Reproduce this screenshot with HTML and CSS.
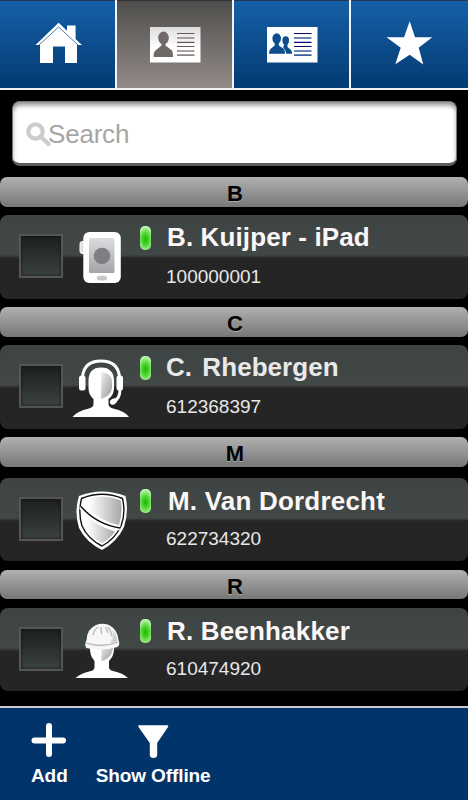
FILE: index.html
```
<!DOCTYPE html>
<html lang="en">
<head>
    <meta charset="UTF-8">
    <meta name="viewport" content="width=device-width, initial-scale=1.0">
    <title>Contacts</title>
    <link rel="stylesheet" href="styles.css">
</head>
<body>
    <!-- Shared gradients for the contact icons -->
    <svg class="defs" width="0" height="0">
        <defs>
            <linearGradient id="shade" x1="0" y1="0" x2="1" y2="1">
                <stop offset="0" stop-color="#eee"/>
                <stop offset="1" stop-color="#999ba0"/>
            </linearGradient>
            <linearGradient id="metal" x1="0" y1="0" x2="1" y2="0">
                <stop offset="0.15" stop-color="#fff"/>
                <stop offset="1" stop-color="#a6a8ab"/>
            </linearGradient>
            <linearGradient id="screen" x1="0" y1="0" x2="0" y2="1">
                <stop offset="0" stop-color="#dcdddf"/>
                <stop offset="1" stop-color="#a2a4a8"/>
            </linearGradient>
            <linearGradient id="card" x1="0" y1="0" x2="0" y2="1">
                <stop offset="0" stop-color="#ddd"/>
                <stop offset="0.6" stop-color="#fff"/>
            </linearGradient>
        </defs>
    </svg>

    <nav class="tabs">
        <a class="tab" aria-label="Home">
            <svg width="115" height="88" viewBox="0 0 115 88">
                <path d="M40 43.500L58.600 26.500L77 43.500V63H65V46.500H53V63H40z" fill="#fff"/>
                <path d="M35.500 45L58.600 22.800L67 30.800V25.500H75.600V39L82 45H77.500L58.600 27L39.500 45z" fill="#fff"/>
                <path d="M39 45L58.600 27L78 45" fill="none" stroke="#356ba8" stroke-width="0.9"/>
            </svg>
        </a>
        <a class="tab active" aria-label="Contacts">
            <svg width="115" height="88" viewBox="0 0 115 88">
                <rect x="33" y="27" width="50.500" height="35.500" fill="url(#card)"/>
                <ellipse cx="46.500" cy="38" rx="5.300" ry="6.400" fill="#6f6a68"/>
                <path d="M44.500 43.500H48.500V45.500L55 50.500Q56 52 56 57H36.500Q36.500 52 38.500 50.500L44.500 45.500z" fill="#6f6a68"/>
                <path d="M60 33.500H77.500M60 42.300H77.500M60 46.500H77.500" stroke="#65595a" stroke-width="1.200"/>
                <path d="M60 38H77.500M60 51H77.500M60 55.200H77.500" stroke="#8c8584" stroke-width="1.700"/>
            </svg>
        </a>
        <a class="tab" aria-label="Groups">
            <svg width="115" height="88" viewBox="0 0 115 88">
                <rect x="33" y="27" width="50.500" height="35.500" fill="#fff"/>
                <g fill="#0e4e90">
                    <ellipse cx="42.700" cy="38.500" rx="4.300" ry="5.300"/>
                    <path d="M40.700 42H44.800V45.500L50 49Q51 50.500 51 53.700H35Q35 50.500 36.500 49L40.700 45.500z"/>
                    <ellipse cx="51.700" cy="40.500" rx="3.300" ry="4.200"/>
                    <path d="M50.200 44H53.500V47L57 50Q58.200 51.500 58.200 53.700H52.300Q52 50 49.200 47.800z"/>
                </g>
                <path d="M60 33.500H77.500M60 42.300H77.500M60 46.500H77.500" stroke="#080877" stroke-width="1.200"/>
                <path d="M60 38H77.500M60 51H77.500M60 55.200H77.500" stroke="#3a6098" stroke-width="1.700"/>
            </svg>
        </a>
        <a class="tab" aria-label="Favorites">
            <svg width="117" height="88" viewBox="0 0 117 88">
                <path d="M58.700 21.300L64 37.300H81.300L67.700 47.800L72.300 64.500L58.700 54.700L44.300 64.300L49.700 47.800L35.500 37.300H53z" fill="#fff"/>
            </svg>
        </a>
    </nav>

    <div class="search">
        <svg width="25" height="25" viewBox="0 0 25 25">
            <circle cx="9.500" cy="9.500" r="7.200" fill="none" stroke="#ccc" stroke-width="4.200"/>
            <path d="M15 15L22.500 22" stroke="#ccc" stroke-width="4.400" stroke-linecap="round"/>
        </svg>
        <span>Search</span>
    </div>

    <main class="contacts">
        <h2 class="letter">B</h2>
        <div class="contact">
            <span class="checkbox"></span>
            <svg class="avatar" width="60" height="62" viewBox="0 0 60 62">
                <path d="M12 14.500H10Q8 14.500 8 17V24Q8 26.500 10 26.500H12z" fill="#ddd" stroke="#fff"/>
                <rect x="11.300" y="5" width="37.500" height="51" rx="6" fill="#fff"/>
                <rect x="17" y="11" width="25.500" height="35" rx="1.500" fill="url(#screen)"/>
                <circle cx="30" cy="29" r="8.300" fill="#7d7f82"/>
                <ellipse cx="30" cy="51" rx="5.200" ry="2.600" fill="#c6c7c9"/>
            </svg>
            <span class="status"></span>
            <div class="info">
                <div class="name name-b">B. Kuijper - iPad</div>
                <div class="number">100000001</div>
            </div>
        </div>

        <h2 class="letter">C</h2>
        <div class="contact">
            <span class="checkbox"></span>
            <svg class="avatar" width="60" height="62" viewBox="0 0 60 62">
                <path d="M0.500 60Q5 54 17 51.500Q21.500 50 21.500 47V42Q16.500 38 16.500 31V24Q16.500 10.500 29 10.500Q42 10.500 42 24V31Q42 38 36.500 42V47Q36.500 50 41 51.500Q53 54 57 60z" fill="#fff"/>
                <path d="M29.500 15Q40 16 40 25V31Q39 39 29 42z" fill="url(#shade)"/>
                <path d="M10.500 20Q12 4 29 4Q46 4 47.500 20M48 32Q48 42 42 44" fill="none" stroke="#fff" stroke-width="3"/>
                <rect x="7" y="18.500" width="6.500" height="15" rx="2.500" fill="#fff"/>
                <rect x="44.500" y="18.500" width="6.500" height="15" rx="2.500" fill="#fff"/>
                <ellipse cx="41.500" cy="44.500" rx="3.800" ry="2.800" fill="#fff" transform="rotate(-30 41.500 44.500)"/>
            </svg>
            <span class="status"></span>
            <div class="info">
                <div class="name name-c">C. Rhebergen</div>
                <div class="number">612368397</div>
            </div>
        </div>

        <h2 class="letter">M</h2>
        <div class="contact low">
            <span class="checkbox"></span>
            <svg class="avatar" width="60" height="62" viewBox="0 0 60 62">
                <path d="M7 6Q30-3 53.500 6Q57 22 52 37Q45 52 30 60Q14 52 7 38Q2 22 7 6z" fill="#fff"/>
                <path d="M9.500 8.500Q30 0 50.500 8.500Q54 23 49 36Q43 49 30 56Q16 49 10 36Q6 23 9.500 8.500z" fill="#fff" stroke="#111" stroke-width="1.400"/>
                <path d="M11.500 10.500Q30 3 48.700 10.500Q51 22 47 35.500Q26 30 11 14z" fill="url(#metal)"/>
                <path d="M10.500 22Q24 36 43 41.500Q38 49 30 53Q17 47 12 36Q10 29 10.500 22z" fill="url(#metal)"/>
                <path d="M9 16.500Q24 34 48 38" fill="none" stroke="#fff" stroke-width="5"/>
                <path d="M9 16.500Q24 34 48 38" fill="none" stroke="#111" stroke-width="1.500"/>
            </svg>
            <span class="status"></span>
            <div class="info">
                <div class="name name-m">M. Van Dordrecht</div>
                <div class="number">622734320</div>
            </div>
        </div>

        <h2 class="letter short">R</h2>
        <div class="contact last">
            <span class="checkbox"></span>
            <svg class="avatar" width="60" height="62" viewBox="0 0 60 62">
                <path d="M3.500 58Q9 53 19 51Q22.500 50 22.500 47V41Q18 36 18 29V23H42V29Q42 36 37 41V47Q37 50 41 51Q51 53 56 58z" fill="#fff"/>
                <path d="M29.500 27Q37 26 41 24V29Q39 39 29.500 41z" fill="url(#shade)"/>
                <path d="M14.500 20Q15 9 24 5Q30 2.500 37 5Q46 10 46.500 20Q48.500 25 45.500 27Q30 32 14.500 28Q12 25 14.500 20z" fill="#f7f7f7"/>
                <path d="M14.500 23Q30 28.500 46 22" fill="none" stroke="#b5b6b9" stroke-width="1.300"/>
                <path d="M21 15Q22 10 26 7M29.500 14L29 7M36 13L33.500 7M40 16Q39 11 36 7" fill="none" stroke="#bcbdc0" stroke-width="1.500"/>
                <path d="M39 9Q45 13 45 21Q42 23 38 23Q43 16 39 9z" fill="url(#shade)" opacity="0.6"/>
            </svg>
            <span class="status"></span>
            <div class="info">
                <div class="name name-r">R. Beenhakker</div>
                <div class="number">610474920</div>
            </div>
        </div>
    </main>

    <footer class="toolbar">
        <button class="tool" type="button">
            <svg width="36" height="36" viewBox="0 0 36 36">
                <path d="M18 4V32M3.500 18.500H32" stroke="#fff" stroke-width="6" stroke-linecap="round"/>
            </svg>
            <span>Add</span>
        </button>
        <button class="tool" type="button">
            <svg width="36" height="36" viewBox="0 0 36 36">
                <path d="M4 3.200H32.500Q34 3.200 33 5L22.200 21V33Q22 36 18.500 36Q15 36 14.800 33V21L3.500 5Q2.500 3.200 4 3.200z" fill="#fff"/>
            </svg>
            <span>Show Offline</span>
        </button>
    </footer>
</body>
</html>
```
FILE: styles.css
```
* {
    box-sizing: border-box;
}

body {
    margin: 0;
    width: 468px;
    height: 800px;
    display: flex;
    flex-direction: column;
    overflow: hidden;
    background-color: #000;
    font-family: "Liberation Sans", Arial, sans-serif;
}

svg {
    display: block;
    flex-shrink: 0;
}

.defs {
    position: absolute;
}

/* Top navigation */
.tabs {
    display: flex;
    height: 90px;
    flex-shrink: 0;
    border-bottom: 2px solid #eef2f7;
}

.tab {
    width: 117px;
    border-right: 2px solid #f2f4f8;
    background: linear-gradient(#1660a8, #033b72);
    box-shadow: inset 0 1px 0 #253652;
}

.tab:last-child {
    border-right: none;
}

.tab.active {
    background: linear-gradient(#4e4d4b, #938b87);
    box-shadow: inset 0 1px 0 #333;
}

/* Search field */
.search {
    display: flex;
    align-items: center;
    height: 65px;
    margin: 11px 11px 11px 12px;
    padding: 0 14px 0 13px;
    flex-shrink: 0;
    border: 1px solid #777;
    border-bottom: 3px solid #5c5c5c;
    border-radius: 8px;
    background-color: #fff;
    box-shadow: inset 0 4px 5px -1px #888;
    color: #a5a5a5;
    font-size: 26px;
    letter-spacing: -0.2px;
}

.search svg {
    margin-top: 4px;
}

.search span {
    margin: 4px 0 0 -3px;
}

/* Contact list */
.contacts {
    height: 529px;
    flex-shrink: 0;
}

.letter {
    height: 30px;
    margin: 0 0 8px;
    padding-left: 2px;
    border-radius: 7px;
    background: linear-gradient(#b0b0b0, #777);
    color: #000;
    font-size: 22px;
    line-height: 34px;
    text-align: center;
    text-shadow: 0 1px 0 #aaa;
}

.letter.short {
    margin-bottom: 9px;
    height: 29px;
}

.contact {
    display: flex;
    height: 84px;
    margin-bottom: 8px;
    padding-left: 19px;
    border-radius: 8px;
    background: linear-gradient(#3e4443 0, #424846 40px, #252525 43px, #252525 100%);
}

.contact.low {
    height: 83px;
    margin: 11px 0 9px;
}

.contact.last {
    height: 83px;
    margin-bottom: 0;
}

.checkbox {
    width: 44px;
    height: 44px;
    margin-top: 19px;
    border: 2px solid #555;
    background: linear-gradient(#1c1f1e, #3b4241);
    box-shadow: inset 0 0 3px #111;
}

.avatar {
    margin: 12px 0 0 9px;
}

.status {
    width: 11px;
    height: 24px;
    margin: 11px 0 0 8px;
    border-radius: 5px;
    background: radial-gradient(ellipse 8px 13px at 50% 55%, #27bd08 10%, #55d83a 50%, #c4f7b7 100%);
}

.info {
    padding: 7px 0 0 15px;
    white-space: nowrap;
}

.name {
    height: 30px;
    padding-left: 1px;
    color: #fbf7f7;
    font-size: 26px;
    font-weight: bold;
    line-height: 30px;
}

.name-b {
    letter-spacing: 0.12px;
}

.name-c {
    color: #e9e9e9;
    padding-left: 0;
    letter-spacing: 0.05px;
    word-spacing: 3px;
}

.name-m {
    padding-left: 2px;
    letter-spacing: 0.2px;
    line-height: 32px;
}

.name-r {
    letter-spacing: 0.18px;
    line-height: 32px;
}

.number {
    margin-top: 15px;
    color: #e8e8e8;
    font-size: 19px;
    line-height: 20px;
}

.low .number,
.last .number {
    margin-top: 14px;
}

/* Bottom toolbar */
.toolbar {
    display: flex;
    gap: 28px;
    height: 94px;
    padding: 14px 0 0 31px;
    flex-shrink: 0;
    border-top: 2px solid #c9cdd2;
    background-color: #00346a;
}

.tool {
    display: flex;
    flex-direction: column;
    align-items: center;
    justify-content: flex-start;
    padding: 0;
    border: none;
    background: none;
    color: #fff;
    font-family: inherit;
    font-size: 19px;
    font-weight: bold;
    line-height: 22px;
    height: 72px;
}

.tool span {
    margin-top: 7px;
    letter-spacing: -0.1px;
}
```
